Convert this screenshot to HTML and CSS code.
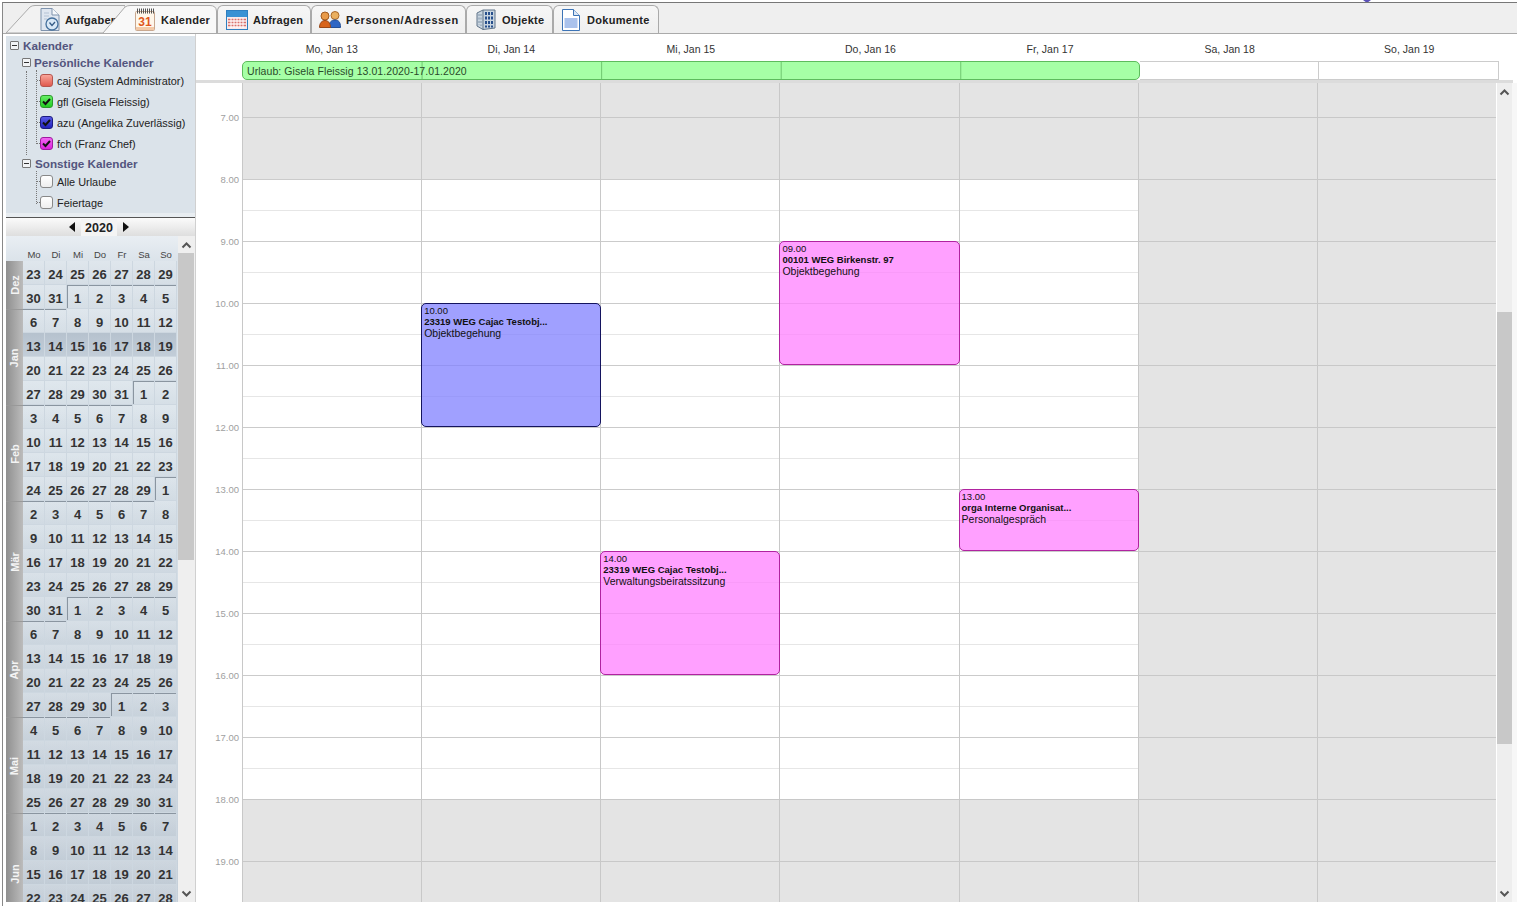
FILE: index.html
```html
<!DOCTYPE html>
<html lang="de">
<head>
<meta charset="utf-8">
<title>Kalender</title>
<link rel="stylesheet" href="styles.css">
</head>
<body>
<span class="notch"></span>
<div class="window">
  <nav class="tabbar">
    <div class="tab slant first">
      <svg class="shape" width="119" height="28" viewBox="0 0 119 28"><path d="M0 28 L24 2 Q26 .5 29 .5 L119 .5 V28Z" fill="#f2f2f2" stroke="#aaa"/></svg>
      <svg class="icon" width="20" height="23" viewBox="0 0 20 23"><path d="M1 .5H12L19 7V22.5H1Z" fill="#dfe6f0" stroke="#7f93ad"/><path d="M12 .5V7H19" fill="#f6f8fb" stroke="#7f93ad"/><path d="M4 5H9M4 8H9M4 11H7" stroke="#b4c2d4"/><circle cx="12" cy="16" r="6" fill="#d9e8f6" stroke="#45709c" stroke-width="1.3"/><path d="M9.5 14.5L12 17.5L15 14" fill="none" stroke="#345a85" stroke-width="1.3"/></svg>
      <span class="label">Aufgaben</span>
    </div>
    <div class="tab slant second">
      <svg class="shape" width="117" height="29" viewBox="0 0 117 29"><path d="M3 28 L25 2 Q27 .5 30 .5 L110 .5 Q116 .5 116.5 6 V28" fill="#f8f8f8" stroke="#aaa"/></svg>
      <svg class="icon" width="22" height="23" viewBox="0 0 22 23"><rect x="1.5" y="3.5" width="19" height="19" rx="1" fill="#fff6ea" stroke="#c9a88f"/><path d="M3 3H20" stroke="#555" stroke-width="5" stroke-dasharray="1 1"/><rect x="2" y="19" width="18" height="3" fill="#f3c9a8"/><text class="cal-num" x="11" y="17.500">31</text></svg>
      <span class="label">Kalender</span>
    </div>
    <div class="tab tab-queries">
      <svg class="icon" width="22" height="20" viewBox="0 0 22 20"><rect x=".5" y=".5" width="21" height="19" fill="#fbeaea" stroke="#2f7fc0"/><rect x="1" y="1" width="20" height="6" fill="#3a92d4"/><path d="M2 9.5H20M2 12.5H20M2 15.5H20" stroke="#d9716b" stroke-width="1.5"/><path d="M5 8V18M8 8V18M11 8V18M14 8V18M17 8V18" stroke="#fff"/></svg>
      <span class="label">Abfragen</span>
    </div>
    <div class="tab tab-people">
      <svg class="icon" width="22" height="17" viewBox="0 0 22 17"><circle cx="16" cy="4.5" r="4" fill="#eab060" stroke="#a9682a"/><path d="M10 16.500C10 11 12.500 9 16 9S21.500 11 21.500 16.500Z" fill="#2f66c4" stroke="#244f96"/><circle cx="6" cy="5" r="4" fill="#e89a48" stroke="#a05a20"/><path d="M.5 16.500C.5 12 3 9.500 6 9.500S11.500 12 11.500 16.500Z" fill="#d8641c" stroke="#98481a"/></svg>
      <span class="label">Personen/Adressen</span>
    </div>
    <div class="tab tab-objects">
      <svg class="icon" width="20" height="21" viewBox="0 0 20 21"><path d="M1 4L7 1H19V19L7 20.500L1 17Z" fill="#c9d5e0" stroke="#5f7388"/><path d="M7 1V20.500" stroke="#5f7388"/><path d="M10 3V18.500M13 3V18.500M16 3V18.500" stroke="#274f8c" stroke-width="2" stroke-dasharray="3 1.500"/><path d="M3 5V16M5 5V17" stroke="#7f93a8" stroke-dasharray="2 1.500"/></svg>
      <span class="label">Objekte</span>
    </div>
    <div class="tab tab-docs">
      <svg class="icon" width="18" height="22" viewBox="0 0 18 22"><path d="M.5 .5H11.500L17.500 6.500V21.500H.5Z" fill="#fff" stroke="#3d74b6"/><path d="M11.500 .5V6.500H17.500" fill="#dbe6f5" stroke="#3d74b6"/><rect x="2.500" y="9" width="13" height="10" fill="#aac2ec"/></svg>
      <span class="label">Dokumente</span>
    </div>
  </nav>

  <div class="content">
    <aside class="sidebar">
      <section class="tree">
        <div class="node root"><span class="toggle"></span>Kalender</div>
        <div class="node sub"><span class="toggle"></span>Persönliche Kalender</div>
        <div class="group">
          <div class="items personal">
            <div class="item"><span class="box red"></span>caj (System Administrator)</div>
            <div class="item"><span class="box green"><svg width="11" height="11" viewBox="0 0 11 11"><path d="M2 5.500L4.500 8L9 3" class="tick"/></svg></span>gfl (Gisela Fleissig)</div>
            <div class="item"><span class="box blue"><svg width="11" height="11" viewBox="0 0 11 11"><path d="M2 5.500L4.500 8L9 3" class="tick"/></svg></span>azu (Angelika Zuverlässig)</div>
            <div class="item"><span class="box pink"><svg width="11" height="11" viewBox="0 0 11 11"><path d="M2 5.500L4.500 8L9 3" class="tick"/></svg></span>fch (Franz Chef)</div>
          </div>
        </div>
        <div class="node sub other"><span class="toggle"></span>Sonstige Kalender</div>
        <div class="group plain">
          <div class="items others">
            <div class="item"><span class="box"></span>Alle Urlaube</div>
            <div class="item"><span class="box"></span>Feiertage</div>
          </div>
        </div>
      </section>
      <div class="tree-gap"></div>
      <div class="yearbar">
        <span class="tri left"></span>
        <span class="year">2020</span>
        <span class="tri right"></span>
      </div>
      <div class="mini">
        <div class="months">
          <span class="corner"></span>
          <span class="wd">Mo</span><span class="wd">Di</span><span class="wd">Mi</span><span class="wd">Do</span><span class="wd">Fr</span><span class="wd">Sa</span><span class="wd">So</span>

          <div class="month m2"><span>Dez</span></div>
          <span class="d">23</span><span class="d">24</span><span class="d">25</span><span class="d">26</span><span class="d">27</span><span class="d">28</span><span class="d">29</span>
          <span class="d">30</span><span class="d">31</span><span class="d first-day">1</span><span class="d top">2</span><span class="d top">3</span><span class="d top">4</span><span class="d top">5</span>

          <div class="month m4 sep"><span>Jan</span></div>
          <span class="d top">6</span><span class="d top">7</span><span class="d">8</span><span class="d">9</span><span class="d">10</span><span class="d">11</span><span class="d">12</span>
          <span class="d cur">13</span><span class="d cur">14</span><span class="d cur">15</span><span class="d cur">16</span><span class="d cur">17</span><span class="d cur">18</span><span class="d cur">19</span>
          <span class="d">20</span><span class="d">21</span><span class="d">22</span><span class="d">23</span><span class="d">24</span><span class="d">25</span><span class="d">26</span>
          <span class="d">27</span><span class="d">28</span><span class="d">29</span><span class="d">30</span><span class="d">31</span><span class="d first-day">1</span><span class="d top">2</span>

          <div class="month m4 sep"><span>Feb</span></div>
          <span class="d top">3</span><span class="d top">4</span><span class="d top">5</span><span class="d top">6</span><span class="d top">7</span><span class="d">8</span><span class="d">9</span>
          <span class="d">10</span><span class="d">11</span><span class="d">12</span><span class="d">13</span><span class="d">14</span><span class="d">15</span><span class="d">16</span>
          <span class="d">17</span><span class="d">18</span><span class="d">19</span><span class="d">20</span><span class="d">21</span><span class="d">22</span><span class="d">23</span>
          <span class="d">24</span><span class="d">25</span><span class="d">26</span><span class="d">27</span><span class="d">28</span><span class="d">29</span><span class="d first-day">1</span>

          <div class="month m5 sep"><span>Mär</span></div>
          <span class="d top">2</span><span class="d top">3</span><span class="d top">4</span><span class="d top">5</span><span class="d top">6</span><span class="d top">7</span><span class="d">8</span>
          <span class="d">9</span><span class="d">10</span><span class="d">11</span><span class="d">12</span><span class="d">13</span><span class="d">14</span><span class="d">15</span>
          <span class="d">16</span><span class="d">17</span><span class="d">18</span><span class="d">19</span><span class="d">20</span><span class="d">21</span><span class="d">22</span>
          <span class="d">23</span><span class="d">24</span><span class="d">25</span><span class="d">26</span><span class="d">27</span><span class="d">28</span><span class="d">29</span>
          <span class="d">30</span><span class="d">31</span><span class="d first-day">1</span><span class="d top">2</span><span class="d top">3</span><span class="d top">4</span><span class="d top">5</span>

          <div class="month m4 sep"><span>Apr</span></div>
          <span class="d top">6</span><span class="d top">7</span><span class="d">8</span><span class="d">9</span><span class="d">10</span><span class="d">11</span><span class="d">12</span>
          <span class="d">13</span><span class="d">14</span><span class="d">15</span><span class="d">16</span><span class="d">17</span><span class="d">18</span><span class="d">19</span>
          <span class="d">20</span><span class="d">21</span><span class="d">22</span><span class="d">23</span><span class="d">24</span><span class="d">25</span><span class="d">26</span>
          <span class="d">27</span><span class="d">28</span><span class="d">29</span><span class="d">30</span><span class="d first-day">1</span><span class="d top">2</span><span class="d top">3</span>

          <div class="month m4 sep"><span>Mai</span></div>
          <span class="d top">4</span><span class="d top">5</span><span class="d top">6</span><span class="d top">7</span><span class="d">8</span><span class="d">9</span><span class="d">10</span>
          <span class="d">11</span><span class="d">12</span><span class="d">13</span><span class="d">14</span><span class="d">15</span><span class="d">16</span><span class="d">17</span>
          <span class="d">18</span><span class="d">19</span><span class="d">20</span><span class="d">21</span><span class="d">22</span><span class="d">23</span><span class="d">24</span>
          <span class="d">25</span><span class="d">26</span><span class="d">27</span><span class="d">28</span><span class="d">29</span><span class="d">30</span><span class="d">31</span>

          <div class="month m5 sep"><span>Jun</span></div>
          <span class="d top">1</span><span class="d top">2</span><span class="d top">3</span><span class="d top">4</span><span class="d top">5</span><span class="d top">6</span><span class="d top">7</span>
          <span class="d">8</span><span class="d">9</span><span class="d">10</span><span class="d">11</span><span class="d">12</span><span class="d">13</span><span class="d">14</span>
          <span class="d">15</span><span class="d">16</span><span class="d">17</span><span class="d">18</span><span class="d">19</span><span class="d">20</span><span class="d">21</span>
          <span class="d">22</span><span class="d">23</span><span class="d">24</span><span class="d">25</span><span class="d">26</span><span class="d">27</span><span class="d">28</span>
        </div>
        <div class="vscroll small">
          <span class="sbtn"><svg width="11" height="7" viewBox="0 0 11 7"><path d="M1.500 5.500L5.500 1.500L9.500 5.500" class="chev"/></svg></span>
          <span class="thumb mini-thumb"></span>
          <span class="sbtn end"><svg width="11" height="7" viewBox="0 0 11 7"><path d="M1.500 1.500L5.500 5.500L9.500 1.500" class="chev"/></svg></span>
        </div>
      </div>
    </aside>

    <main class="main">
      <div class="dayhead">
        <span>Mo, Jan 13</span><span>Di, Jan 14</span><span>Mi, Jan 15</span><span>Do, Jan 16</span><span>Fr, Jan 17</span><span>Sa, Jan 18</span><span>So, Jan 19</span>
      </div>
      <div class="allday">
        <div class="vacation">Urlaub: Gisela Fleissig 13.01.2020-17.01.2020</div>
        <div class="free"></div>
        <div class="free"></div>
      </div>
      <div class="divider"></div>
      <div class="schedule">
        <div class="gutter">
          <span>7.00</span><span>8.00</span><span>9.00</span><span>10.00</span><span>11.00</span><span>12.00</span><span>13.00</span><span>14.00</span><span>15.00</span><span>16.00</span><span>17.00</span><span>18.00</span><span>19.00</span>
        </div>
        <div class="days">
          <div class="col"><div class="work"></div></div>
          <div class="col"><div class="work"></div>
            <article class="event blue" style="top:220px;height:124px"><p class="t">10.00</p><p class="b">23319 WEG Cajac Testobj...</p><p>Objektbegehung</p></article>
          </div>
          <div class="col"><div class="work"></div>
            <article class="event pink" style="top:468px;height:124px"><p class="t">14.00</p><p class="b">23319 WEG Cajac Testobj...</p><p>Verwaltungsbeiratssitzung</p></article>
          </div>
          <div class="col"><div class="work"></div>
            <article class="event pink" style="top:158px;height:124px"><p class="t">09.00</p><p class="b">00101 WEG Birkenstr. 97</p><p>Objektbegehung</p></article>
          </div>
          <div class="col"><div class="work"></div>
            <article class="event pink" style="top:406px;height:62px"><p class="t">13.00</p><p class="b">orga Interne Organisat...</p><p>Personalgespräch</p></article>
          </div>
          <div class="col"></div>
          <div class="col"></div>
        </div>
        <div class="vscroll large">
          <span class="sbtn"><svg width="11" height="7" viewBox="0 0 11 7"><path d="M1.500 5.500L5.500 1.500L9.500 5.500" class="chev"/></svg></span>
          <span class="thumb main-thumb"></span>
          <span class="sbtn end"><svg width="11" height="7" viewBox="0 0 11 7"><path d="M1.500 1.500L5.500 5.500L9.500 1.500" class="chev"/></svg></span>
        </div>
      </div>
    </main>
  </div>
</div>
</body>
</html>
```
FILE: styles.css
```css
* { box-sizing: border-box; }
html, body { margin: 0; height: 906px; overflow: hidden; background: #fff; }
body { font-family: "Liberation Sans", Arial, sans-serif; color: #222; }
p { margin: 0; }

.notch {
  position: absolute; top: 0; left: 1363px; width: 0; height: 0;
  border-left: 4px solid transparent; border-right: 4px solid transparent; border-top: 3px solid #5a50b8;
}

.window {
  position: relative; top: 2px; left: 2px;
  width: 1515px; height: 904px;
  border-top: 1px solid #777; border-left: 1px solid #888;
}

/* tabs */
.tabbar {
  height: 31px; display: flex; align-items: flex-end;
  padding-left: 3px; background: #efefef; border-bottom: 1px solid #aaa;
}
.tab {
  position: relative; height: 28px; display: flex; align-items: center; gap: 5px;
  background: linear-gradient(#f6f6f6, #efefef);
  border: 1px solid #aaa; border-bottom: 0; border-radius: 6px 6px 0 0;
}
.label { position: relative; font-size: 11px; font-weight: 700; color: #222; letter-spacing: .25px; white-space: nowrap; }
.icon { position: relative; flex: none; }
.shape { position: absolute; left: 0; top: 0; }
.slant { background: none; border: 0; border-radius: 0; padding-left: 34px; }
.first { width: 119px; padding-top: 1px; }
.second { width: 117px; margin-left: -25px; z-index: 1; margin-bottom: -1px; height: 29px; }
.tab-queries { width: 94px; padding-left: 8px; }
.tab-people { width: 155px; padding-left: 7px; }
.tab-people .label { letter-spacing: .55px; }
.tab-objects { width: 87px; padding-left: 9px; gap: 6px; }
.tab-objects .label { letter-spacing: .3px; }
.tab-docs { width: 106px; padding-left: 8px; gap: 7px; }
.tab-docs .label { letter-spacing: .3px; }
.cal-num { font: 700 12px "Liberation Sans", sans-serif; fill: #e0561c; text-anchor: middle; }

.content { display: flex; height: 868px; }

/* sidebar */
.sidebar { width: 193px; padding: 2px 0 0 3px; border-right: 1px solid #d0d0d0; display: flex; flex-direction: column; overflow: hidden; }
.tree { height: 177px; padding-top: 1px; background: #dbe3ea; flex: none; }
.tree-gap { height: 4px; flex: none; background: #e8edf1; }
.node { height: 17px; display: flex; align-items: center; gap: 4px; font-size: 11.700px; font-weight: 700; color: #53557e; }
.root { padding-left: 4px; }
.sub { padding-left: 16px; gap: 3px; }
.other { gap: 4px; }
.toggle {
  position: relative; width: 9px; height: 9px; flex: none; border: 1px solid #777; border-radius: 1px; background: #f2f4f6;
}
.toggle::after { content: ""; position: absolute; left: 1px; right: 1px; top: 3px; height: 1px; background: #333; }
.group { margin-left: 20px; height: 84px; border-left: 1px dotted #777; }
.group.plain { border-left: 0; padding-left: 1px; height: 42px; }
.items { margin-left: 9px; border-left: 1px dotted #777; position: relative; top: -1px; }
.personal { height: 74px; }
.others { height: 33px; }
.item { height: 21px; display: flex; align-items: center; font-size: 10.900px; color: #222; white-space: nowrap; }
.item::before { content: ""; width: 3px; border-top: 1px dotted #777; flex: none; }
.box {
  width: 13px; height: 13px; margin-right: 4px; flex: none; border: 1px solid #888; border-radius: 3px;
  background: linear-gradient(#fff, #eee); display: flex; align-items: center; justify-content: center;
}
.box.red { background: linear-gradient(#f9a59a, #e05a4e); border-color: #b5554e; }
.box.green { background: linear-gradient(#66ee66, #22cc22); border-color: #2c9a2c; }
.box.blue { background: linear-gradient(#5a5ae8, #2222bb); border-color: #1c1c80; }
.box.pink { background: linear-gradient(#f266f2, #dd22dd); border-color: #a01aa0; }
.tick { fill: none; stroke: #111; stroke-width: 2; }

.yearbar {
  height: 19px; flex: none; display: flex; align-items: center; justify-content: center; gap: 6px;
  padding-right: 3px; border-top: 1px solid #555; background: linear-gradient(#fbfbfb, #dedede);
}
.year { padding: 1px 4px 0; font-size: 12.500px; font-weight: 700; color: #222; background: #f4f4f4; line-height: 16px; }
.tri { width: 0; height: 0; border-top: 5px solid transparent; border-bottom: 5px solid transparent; }
.tri.left { border-right: 6px solid #111; }
.tri.right { border-left: 6px solid #111; }

.mini { flex: 1; min-height: 0; display: flex; overflow: hidden; }
.months {
  width: 172px; flex: none; display: grid; grid-template-columns: 17px repeat(7, 22px);
  grid-template-rows: 25px; grid-auto-rows: 24px; align-content: start; overflow: hidden;
  background: linear-gradient(#e9eef3 0, #dbe3ea 25px, #dbe4eb 170px, #c5cfd9 100%);
}
.wd { align-self: end; padding-bottom: 1px; text-align: center; font-size: 9.500px; line-height: 11px; color: #444; }
.month {
  grid-column: 1; display: flex; align-items: center; justify-content: center;
  background: linear-gradient(90deg, #8f8f8f, #bcbcbc);
}
.month.sep { border-top: 1px solid #999; }
.month span { transform: rotate(-90deg); font-size: 11px; font-weight: 700; color: #f4f4f4; white-space: nowrap; }
.m2 { grid-row: span 2; }
.m4 { grid-row: span 4; }
.m5 { grid-row: span 5; }
.d {
  display: flex; align-items: center; justify-content: center; padding-top: 4px;
  font-size: 13px; font-weight: 700; color: #333;
  border-right: 1px solid #cdd7e0; border-bottom: 1px solid #cdd7e0;
  background: linear-gradient(rgba(255, 255, 255, .12), rgba(80, 100, 120, .04));
}
.d.cur { background: linear-gradient(#b6c2ce, #c2cdd8); }
.d.top { box-shadow: inset 0 1px #8a95a0; }
.d.first-day { box-shadow: inset 0 1px #8a95a0, inset 1px 0 #8a95a0; }

.vscroll { display: flex; flex-direction: column; background: #efefef; }
.vscroll.small { width: 17px; flex: none; }
.vscroll.large { width: 21px; flex: none; border-left: 1px solid #fff; padding-right: 5px; background: linear-gradient(90deg, #eee 15px, #f7f7f7 15px); }
.sbtn { height: 17px; flex: none; display: flex; align-items: center; justify-content: center; }
.small .sbtn { padding-top: 2px; }
.small .sbtn.end { padding-top: 0; padding-bottom: 0; }
.sbtn.end { margin-top: auto; }
.thumb { display: block; background: #c8c8c8; flex: none; }
.mini-thumb { height: 307px; width: 16px; }
.main-thumb { height: 432px; width: 15px; margin-top: 211px; }
.large .sbtn { height: 18px; }
.chev { fill: none; stroke: #555; stroke-width: 2; }

/* main */
.main { width: 1321px; display: flex; flex-direction: column; flex: none; }
.dayhead {
  height: 27px; padding: 3px 0 0 46px; width: 1303px;
  display: grid; grid-template-columns: repeat(7, 1fr); align-items: center; text-align: center;
  font-size: 10.500px; letter-spacing: .02px; color: #333;
}
.allday {
  margin-left: 46px; width: 1257px; height: 19px;
  display: grid; grid-template-columns: repeat(7, 1fr);
}
.vacation {
  grid-column: span 5; padding: 2px 4px 0; font-size: 10.500px; letter-spacing: .07px; color: #2a4a2a; white-space: nowrap;
  border: 1px solid #5dbb5d; border-radius: 5px; line-height: 15px; height: 18.500px;
  background: #a6ffa6 linear-gradient(90deg, transparent 178.600px, #6fc76f 178.600px, #6fc76f 179.570px) 0 0 / 179.570px 100% repeat-x;
}
.free { border-top: 1px solid #ccc; border-right: 1px solid #ccc; border-bottom: 1px solid #ccc; }
.divider { height: 3px; width: 1317px; background: #dcdcdc; flex: none; }

.schedule { display: flex; height: 819px; overflow: hidden; }
.gutter { width: 46px; flex: none; display: flex; flex-direction: column; padding: 28px 3px 0 0; }
.gutter span { height: 62px; flex: none; line-height: 14px; text-align: right; font-size: 9.500px; color: #a0a0a0; }
.days { width: 1254px; flex: none; display: grid; grid-template-columns: repeat(7, 1fr); }
.col {
  position: relative; border-left: 1px solid #c8c8c8;
  background: #e4e4e4 linear-gradient(#c8c8c8 1px, transparent 1px) 0 34px / 100% 62px;
}
.work {
  height: 620px; margin: 96px 0 0;
  background:
    linear-gradient(#cbcbcb 1px, transparent 1px) 0 0 / 100% 62px,
    linear-gradient(#e6e6e6 1px, #fff 1px) 0 0 / 100% 31px;
}
.event {
  position: absolute; left: -1px; right: -1px; padding: 1px 2px; border: 1px solid; border-radius: 5px;
  font-size: 10.500px; line-height: 11.500px; color: #111; z-index: 1; overflow: hidden;
}
.event .t { font-size: 9.500px; line-height: 11px; }
.event .b { font-weight: 700; font-size: 9.500px; }
.event.blue { background: rgba(128, 128, 255, .75); border-color: #14145e; }
.event.pink { background: rgba(255, 128, 255, .75); border-color: #b023a0; }
```
